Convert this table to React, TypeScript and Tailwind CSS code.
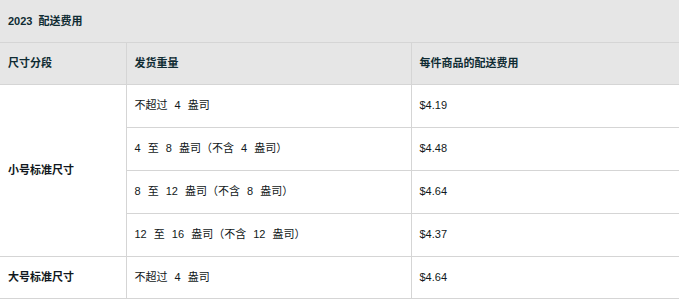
const rows = [
  { weight: "不超过 4 盎司", fee: "$4.19" },
  { weight: "4 至 8 盎司（不含 4 盎司）", fee: "$4.48" },
  { weight: "8 至 12 盎司（不含 8 盎司）", fee: "$4.64" },
  { weight: "12 至 16 盎司（不含 12 盎司）", fee: "$4.37" },
]

export default function App() {
  return (
    <div
      className="w-[679px] h-[299px] overflow-hidden bg-white text-[11px] text-[#111820]"
      style={{ fontFamily: '"Liberation Sans", Arial, "Noto Sans CJK SC", sans-serif' }}
    >
      <table className="w-full border-collapse table-fixed">
        <colgroup>
          <col className="w-[126px]" />
          <col className="w-[285px]" />
          <col />
        </colgroup>
        <thead>
          <tr className="h-[42px] bg-[#e6e6e6]">
            <th colSpan={3} className="text-left font-bold px-2 text-[#0f2c33] border-b border-[#d5d5d5] [word-spacing:3px]">
              2023 配送费用
            </th>
          </tr>
          <tr className="h-[42px] bg-[#e6e6e6] text-[#0f2c33]">
            <th className="text-left font-bold px-2 border-b border-r border-[#d5d5d5]">尺寸分段</th>
            <th className="text-left font-bold px-2 border-b border-r border-[#d5d5d5]">发货重量</th>
            <th className="text-left font-bold px-2 border-b border-[#d5d5d5]">每件商品的配送费用</th>
          </tr>
        </thead>
        <tbody>
          {rows.map((r, i) => (
            <tr key={i} className="h-[43px]">
              {i === 0 && (
                <td rowSpan={4} className="px-2 font-bold border-b border-r border-[#d5d5d5]">
                  小号标准尺寸
                </td>
              )}
              <td className="px-2 border-b border-r border-[#d5d5d5] [word-spacing:4px]">{r.weight}</td>
              <td className="px-2 border-b border-[#d5d5d5]">{r.fee}</td>
            </tr>
          ))}
          <tr className="h-[42px]">
            <td className="px-2 font-bold border-b border-r border-[#d5d5d5]">大号标准尺寸</td>
            <td className="px-2 border-b border-r border-[#d5d5d5] [word-spacing:4px]">不超过 4 盎司</td>
            <td className="px-2 border-b border-[#d5d5d5]">$4.64</td>
          </tr>
        </tbody>
      </table>
    </div>
  )
}
